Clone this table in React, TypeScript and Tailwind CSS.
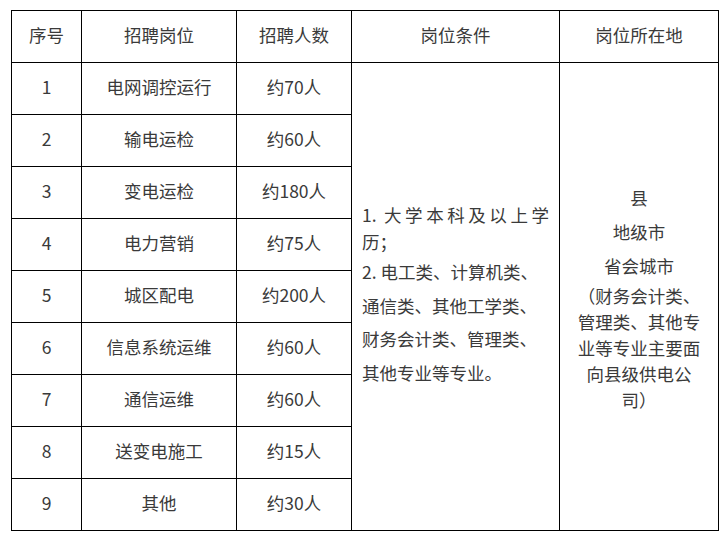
import React from 'react';

const rows = [
  { no: '1', job: '电网调控运行', count: '约70人' },
  { no: '2', job: '输电运检', count: '约60人' },
  { no: '3', job: '变电运检', count: '约180人' },
  { no: '4', job: '电力营销', count: '约75人' },
  { no: '5', job: '城区配电', count: '约200人' },
  { no: '6', job: '信息系统运维', count: '约60人' },
  { no: '7', job: '通信运维', count: '约60人' },
  { no: '8', job: '送变电施工', count: '约15人' },
  { no: '9', job: '其他', count: '约30人' },
];

const cell = 'bg-white flex items-center justify-center pb-[2px]';

const App = () => {
  return (
    <div
      className="w-[726px] h-[540px] bg-white pl-[11px] pt-[10px] text-[#3a3a3a] text-[17.5px]"
      style={{ fontFamily: '"Noto Sans CJK SC", "Noto Sans", sans-serif' }}
    >
      <div className="w-[708px] bg-black p-px grid gap-px grid-cols-[69px_154px_114px_207px_158px] grid-rows-[repeat(10,51px)]">
        {/* header */}
        <div className={cell}>序号</div>
        <div className={cell}>招聘岗位</div>
        <div className={cell}>招聘人数</div>
        <div className={cell}>岗位条件</div>
        <div className={cell}>岗位所在地</div>

        {rows.map((r, i) => (
          <React.Fragment key={r.no}>
            <div className={cell} style={{ gridColumn: 1, gridRow: i + 2 }}>{r.no}</div>
            <div className={cell} style={{ gridColumn: 2, gridRow: i + 2 }}>{r.job}</div>
            <div className={cell} style={{ gridColumn: 3, gridRow: i + 2 }}>{r.count}</div>
          </React.Fragment>
        ))}

        {/* 岗位条件 */}
        <div className="bg-white col-start-4 row-start-2 row-span-9 flex flex-col justify-center px-[10px] pb-[2px]">
          <div className="leading-[26.5px]">
            <div className="text-justify [text-align-last:justify]">1. 大学本科及以上学</div>
            <div>历；</div>
          </div>
          <div className="leading-[33.5px]">
            <div>2. 电工类、计算机类、</div>
            <div>通信类、其他工学类、</div>
            <div>财务会计类、管理类、</div>
            <div>其他专业等专业。</div>
          </div>
        </div>

        {/* 岗位所在地 */}
        <div className="bg-white col-start-5 row-start-2 row-span-9 flex flex-col justify-center items-center text-center">
          <div className="leading-[34px]">
            <div>县</div>
            <div>地级市</div>
            <div>省会城市</div>
          </div>
          <div className="leading-[26px]">
            <div>（财务会计类、</div>
            <div>管理类、其他专</div>
            <div>业等专业主要面</div>
            <div>向县级供电公</div>
            <div>司）</div>
          </div>
        </div>
      </div>
    </div>
  );
};

export default App;
